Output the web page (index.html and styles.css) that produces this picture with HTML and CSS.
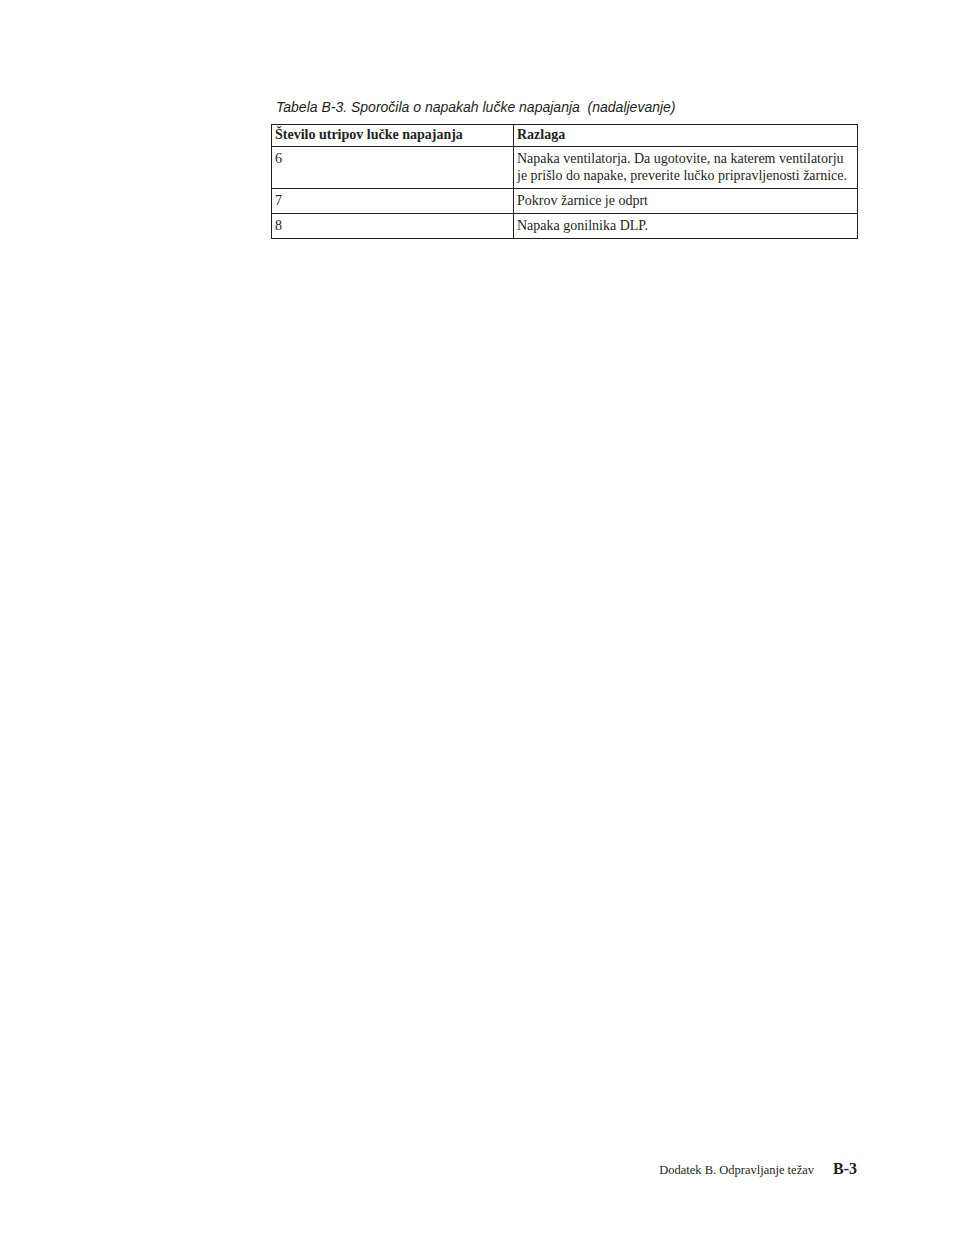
FILE: index.html
```html
<!DOCTYPE html>
<html lang="sl">
<head>
<meta charset="utf-8">
<title>Dodatek B</title>
<link rel="stylesheet" href="styles.css">
</head>
<body>
<div class="page">
  <div class="content">
    <div class="caption">Tabela B-3. Sporočila o napakah lučke napajanja  (nadaljevanje)</div>
    <table class="tbl">
      <colgroup><col class="c1"><col class="c2"></colgroup>
      <thead>
        <tr><th>Število utripov lučke napajanja</th><th>Razlaga</th></tr>
      </thead>
      <tbody>
        <tr><td>6</td><td>Napaka ventilatorja. Da ugotovite, na katerem ventilatorju je prišlo do napake, preverite lučko pripravljenosti žarnice.</td></tr>
        <tr><td>7</td><td>Pokrov žarnice je odprt</td></tr>
        <tr><td>8</td><td>Napaka gonilnika DLP.</td></tr>
      </tbody>
    </table>
  </div>
  <div class="footer">
    <span class="ftext">Dodatek B. Odpravljanje težav</span>
    <span class="fnum">B-3</span>
  </div>
</div>
</body>
</html>
```

FILE: styles.css
```css
html, body {
  margin: 0;
  padding: 0;
  background: #fff;
}
.page {
  width: 954px;
  height: 1235px;
  display: flex;
  flex-direction: column;
  color: #231f20;
}
.content {
  padding: 98px 0 0 271px;
  width: 587px;
}
.caption {
  font-family: "Liberation Sans", Arial, sans-serif;
  font-style: italic;
  font-size: 14px;
  line-height: 18px;
  padding-left: 5px;
  margin-bottom: 8px;
  white-space: pre;
}
.tbl {
  border-collapse: collapse;
  width: 587px;
  font-family: "Liberation Serif", "Times New Roman", serif;
  font-size: 14px;
  line-height: 17px;
}
.c1 { width: 242px; }
.tbl th, .tbl td {
  border: 1px solid #231f20;
  text-align: left;
  vertical-align: top;
  padding: 3px 2px 4px 3px;
}
.tbl th {
  font-weight: bold;
  padding: 1px 2px 3px 3px;
}
.footer {
  margin-top: auto;
  margin-bottom: 57px;
  display: flex;
  justify-content: flex-end;
  align-items: baseline;
  padding-right: 97px;
  font-family: "Liberation Serif", "Times New Roman", serif;
}
.ftext {
  font-size: 12.5px;
  margin-right: 19px;
}
.fnum {
  font-size: 16px;
  font-weight: bold;
}
```
